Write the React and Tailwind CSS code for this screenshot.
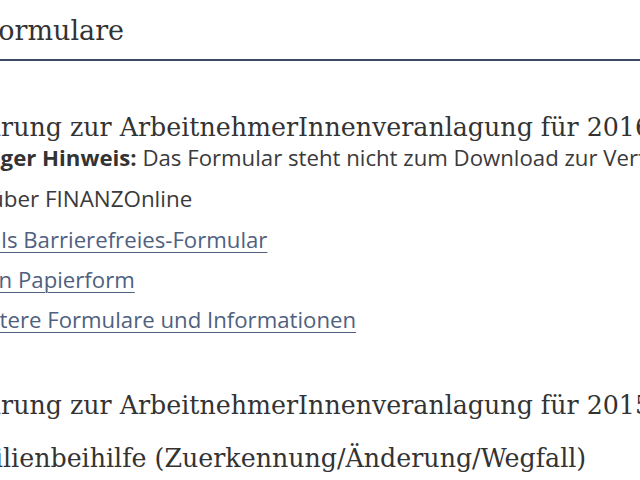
import React from "react";

const serif = "font-['DejaVu_Serif',serif]";
const sans = "font-['Open_Sans',sans-serif]";

export default function App() {
  return (
    <div className="w-[640px] h-[480px] overflow-hidden bg-white text-[#333333]">
      <div className="pt-[11px]">
        <h1
          className={`${serif} text-[27px] leading-[40px] font-normal whitespace-nowrap -ml-[19px]`}
        >
          Formulare
        </h1>
        <div className="mt-[8px] h-[2px] bg-[#3b4866]" />
      </div>

      <section className="mt-[50px]">
        <h2
          className={`${serif} text-[25.3px] leading-[33px] font-normal whitespace-nowrap -ml-[68px]`}
        >
          Erklärung zur ArbeitnehmerInnenveranlagung für 2016
        </h2>
        <p
          className={`${sans} text-[22.2px] leading-[30px] whitespace-nowrap -ml-[70px] -mt-[1px] text-[#3a3a3a]`}
        >
          <strong className="font-bold text-[#333333]">Wichtiger Hinweis:</strong> Das
          Formular steht nicht zum Download zur Verfügung.
        </p>
        <p
          className={`${sans} text-[22.4px] leading-[40px] whitespace-nowrap -ml-[10px] mt-[6px] text-[#3a3a3a]`}
        >
          über FINANZOnline
        </p>
        <ul className={`${sans} text-[22.2px] leading-[40px] mt-[1px] whitespace-nowrap`}>
          <li className="-ml-[11px]">
            <a
              href="#"
              className="text-[#4f6180] underline decoration-1 underline-offset-[4px]"
            >
              als Barrierefreies-Formular
            </a>
          </li>
          <li className="-ml-[7px]">
            <a
              href="#"
              className="text-[#4f6180] underline decoration-1 underline-offset-[4px]"
            >
              in Papierform
            </a>
          </li>
          <li className="-ml-[39px]">
            <a
              href="#"
              className="text-[#4f6180] underline decoration-1 underline-offset-[4px]"
            >
              Weitere Formulare und Informationen
            </a>
          </li>
        </ul>
      </section>

      <section className="mt-[49px]">
        <h2
          className={`${serif} text-[25.3px] leading-[33px] font-normal whitespace-nowrap -ml-[68px]`}
        >
          Erklärung zur ArbeitnehmerInnenveranlagung für 2015
        </h2>
        <h2
          className={`${serif} text-[25.3px] leading-[33px] font-normal whitespace-nowrap -ml-[60px] mt-[20px]`}
        >
          Familienbeihilfe (Zuerkennung/Änderung/Wegfall)
        </h2>
      </section>
    </div>
  );
}
